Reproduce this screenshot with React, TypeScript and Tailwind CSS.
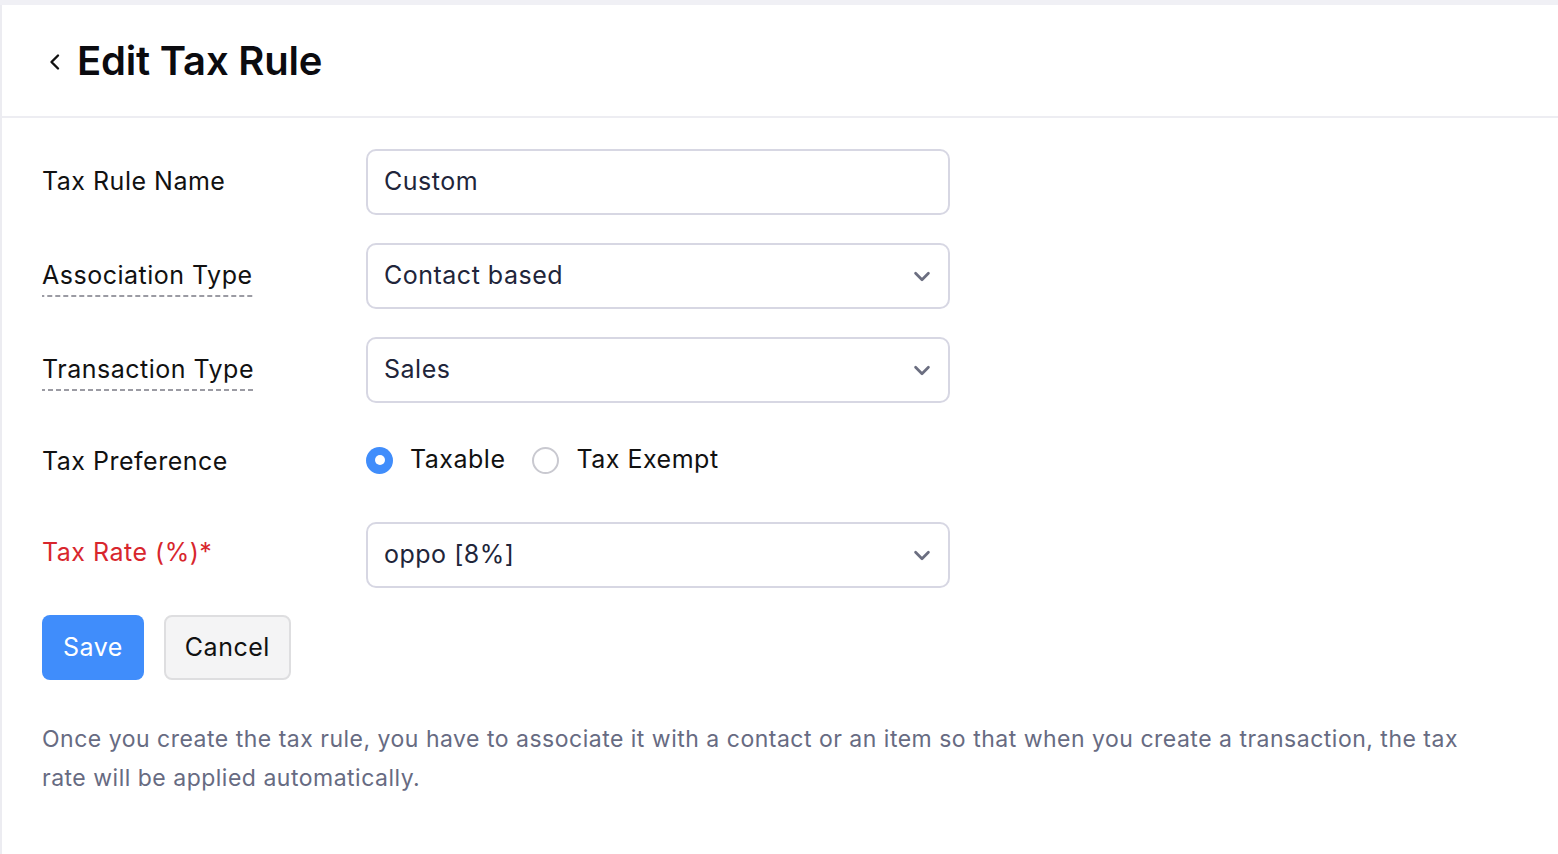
import React from "react";

function Chevron() {
  return (
    <svg width="22" height="22" viewBox="0 0 24 24" fill="none" className="shrink-0">
      <path d="M5 9l7 7 7-7" stroke="#6b6e80" strokeWidth="3" strokeLinecap="round" strokeLinejoin="round" />
    </svg>
  );
}

function DashedLabel({ children }: { children: React.ReactNode }) {
  return (
    <span className="inline-block pb-[2px] bg-[linear-gradient(to_right,#9b9ba3_62%,transparent_0)] bg-[length:8px_2px] bg-repeat-x bg-bottom">
      {children}
    </span>
  );
}

function SelectBox({ value }: { value: string }) {
  return (
    <div className="w-[584px] h-[66px] rounded-[10px] border-2 border-[#d7d7e3] bg-white flex items-center justify-between pl-[16px] pr-[15px] text-[#21253a]">
      <span>{value}</span>
      <Chevron />
    </div>
  );
}

export default function App() {
  return (
    <div className="min-h-screen bg-white font-['Inter','Noto_Sans',sans-serif] text-[#111]">
      <div className="h-[5px] bg-[#f0f0f5]" />
      <div className="border-l-2 border-[#ececf1] min-h-[849px]">
        <div className="h-[113px] border-b-2 border-[#ededf2] flex items-center pl-[44px]">
          <svg width="18" height="24" viewBox="0 0 18 24" fill="none" className="mr-[13px] mt-[2px]">
            <path d="M12 5.5L5.5 12l6.5 6.5" stroke="#111" strokeWidth="2.4" strokeLinecap="round" strokeLinejoin="round" />
          </svg>
          <h1 className="text-[40px] font-semibold tracking-[-0.2px] text-[#0b0b0f] leading-none">Edit Tax Rule</h1>
        </div>

        <div className="pl-[40px] pr-[40px] pt-[31px] text-[25px] tracking-[0.5px]">
          <div className="flex items-center">
            <div className="w-[324px]">Tax Rule Name</div>
            <div className="w-[584px] h-[66px] rounded-[10px] border-2 border-[#d7d7e3] bg-white flex items-center pl-[16px] text-[#21253a]">
              Custom
            </div>
          </div>

          <div className="flex items-center mt-[28px]">
            <div className="w-[324px] pt-[2px]">
              <DashedLabel>Association Type</DashedLabel>
            </div>
            <SelectBox value="Contact based" />
          </div>

          <div className="flex items-center mt-[28px]">
            <div className="w-[324px] pt-[2px]">
              <DashedLabel>Transaction Type</DashedLabel>
            </div>
            <SelectBox value="Sales" />
          </div>

          <div className="flex items-center mt-[39px] h-[36px]">
            <div className="w-[324px] pt-[4px]">Tax Preference</div>
            <div className="flex items-center text-[#111]">
              <div className="w-[27px] h-[27px] rounded-full bg-[#408dfb] flex items-center justify-center">
                <div className="w-[10px] h-[10px] rounded-full bg-white" />
              </div>
              <span className="ml-[17px]">Taxable</span>
              <div className="w-[27px] h-[27px] rounded-full border-2 border-[#c9c9d0] ml-[27px]" />
              <span className="ml-[17px]">Tax Exempt</span>
            </div>
          </div>

          <div className="flex items-center mt-[44px]">
            <div className="w-[324px] text-[#d8262d] pb-[4px]">Tax Rate (%)*</div>
            <SelectBox value="oppo [8%]" />
          </div>

          <div className="flex items-center gap-[20px] mt-[27px]">
            <button className="h-[65px] px-[21px] rounded-[8px] bg-[#408dfb] text-white">Save</button>
            <button className="h-[65px] px-[19px] rounded-[8px] bg-[#f4f4f5] border-2 border-[#dedee0] text-[#111]">Cancel</button>
          </div>

          <p className="mt-[40px] text-[23px] tracking-[0.5px] leading-[39px] text-[#676b82] max-w-[1450px]">
            Once you create the tax rule, you have to associate it with a contact or an item so that when you create a transaction, the tax rate will be applied automatically.
          </p>
        </div>
      </div>
    </div>
  );
}
